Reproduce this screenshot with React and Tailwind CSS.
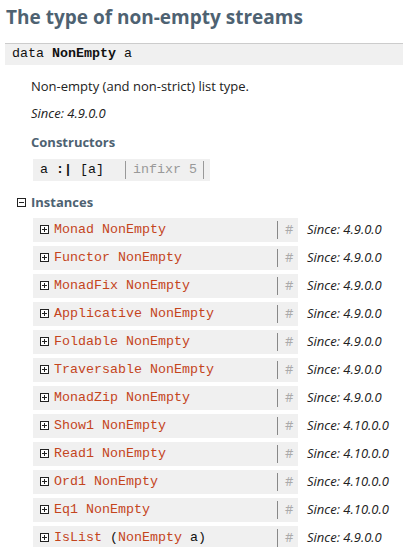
import React from "react";

const sans = { fontFamily: '"Open Sans", "Noto Sans", sans-serif' };
const mono = { fontFamily: '"Liberation Mono", monospace' };

function PlusBox({ minus }) {
  return (
    <svg width="9" height="9" viewBox="0 0 9 9" className="shrink-0 block">
      <rect x="0.5" y="0.5" width="8" height="8" fill="white" stroke="#222" strokeWidth="1" />
      <line x1="2" y1="4.5" x2="7" y2="4.5" stroke="#222" strokeWidth="1" />
      {!minus && <line x1="4.5" y1="2" x2="4.5" y2="7" stroke="#222" strokeWidth="1" />}
    </svg>
  );
}

const rows = [
  [["Monad", "NonEmpty"], "4.9.0.0"],
  [["Functor", "NonEmpty"], "4.9.0.0"],
  [["MonadFix", "NonEmpty"], "4.9.0.0"],
  [["Applicative", "NonEmpty"], "4.9.0.0"],
  [["Foldable", "NonEmpty"], "4.9.0.0"],
  [["Traversable", "NonEmpty"], "4.9.0.0"],
  [["MonadZip", "NonEmpty"], "4.9.0.0"],
  [["Show1", "NonEmpty"], "4.10.0.0"],
  [["Read1", "NonEmpty"], "4.10.0.0"],
  [["Ord1", "NonEmpty"], "4.10.0.0"],
  [["Eq1", "NonEmpty"], "4.10.0.0"],
  ["islist", "4.9.0.0"],
];

function Link({ children }) {
  return <span className="text-[#c4451d]">{children}</span>;
}

export default function App() {
  return (
    <div className="w-[403px] h-[547px] overflow-hidden bg-white text-[#222]" style={sans}>
      <h1 className="pt-[2px] pl-[6px] text-[19px] leading-[30px] font-bold text-[#4e6272]">
        The type of non-empty streams
      </h1>
      <div
        className="mt-[11px] ml-[5px] border-t border-[#cccccc] bg-[#f0f0f0] pl-[7px] pb-[1px] text-[13.33px] leading-[20px] text-[#111]"
        style={mono}
      >
        data <span className="font-bold">NonEmpty</span> a
      </div>
      <div className="pl-[31px]">
        <p className="mt-[11px] text-[13px] leading-[20px]">Non-empty (and non-strict) list type.</p>
        <p className="mt-[7px] text-[13px] leading-[20px] italic">Since: 4.9.0.0</p>
        <div className="mt-[9px] text-[13px] leading-[20px] font-bold text-[#4e6272]">Constructors</div>
        <div className="mt-[7px] ml-[2px] w-[177px] h-[22px] bg-[#f0f0f0] flex items-center text-[13.33px]" style={mono}>
          <span className="pl-[7px] w-[92px] text-[#111] whitespace-nowrap">
            a <span className="font-bold">:|</span> [a]
          </span>
          <span className="w-px h-[18px] bg-[#999]" />
          <span className="pl-[7px] w-[77px] text-[#999] whitespace-nowrap">infixr 5</span>
          <span className="w-px h-[18px] bg-[#999]" />
        </div>
      </div>
      <div className="mt-[11px] pl-[17px] flex items-center gap-[5px] h-[20px]">
        <PlusBox minus />
        <span className="text-[13px] leading-[20px] font-bold text-[#4e6272]">Instances</span>
      </div>
      <div className="mt-[6px] pl-[33px] flex flex-col gap-[4px]">
        {rows.map(([name, since], i) => (
          <div key={i} className="flex items-center">
            <div className="w-[265px] h-[24px] bg-[#f0f0f0] flex items-center">
              <div className="flex-1 flex items-center pl-[7px] gap-[5px] text-[13.33px] whitespace-nowrap" style={mono}>
                <PlusBox />
                {name === "islist" ? (
                  <span className="text-[#111]">
                    <Link>IsList</Link> (<Link>NonEmpty</Link> a)
                  </span>
                ) : (
                  <span>
                    <Link>{name[0]}</Link> <Link>{name[1]}</Link>
                  </span>
                )}
              </div>
              <span className="w-px h-[18px] bg-[#888]" />
              <span className="w-[20px] pl-[7px] text-[13px] text-[#aaa]">#</span>
            </div>
            <span className="ml-[9px] text-[13px] italic whitespace-nowrap">Since: {since}</span>
          </div>
        ))}
      </div>
    </div>
  );
}
